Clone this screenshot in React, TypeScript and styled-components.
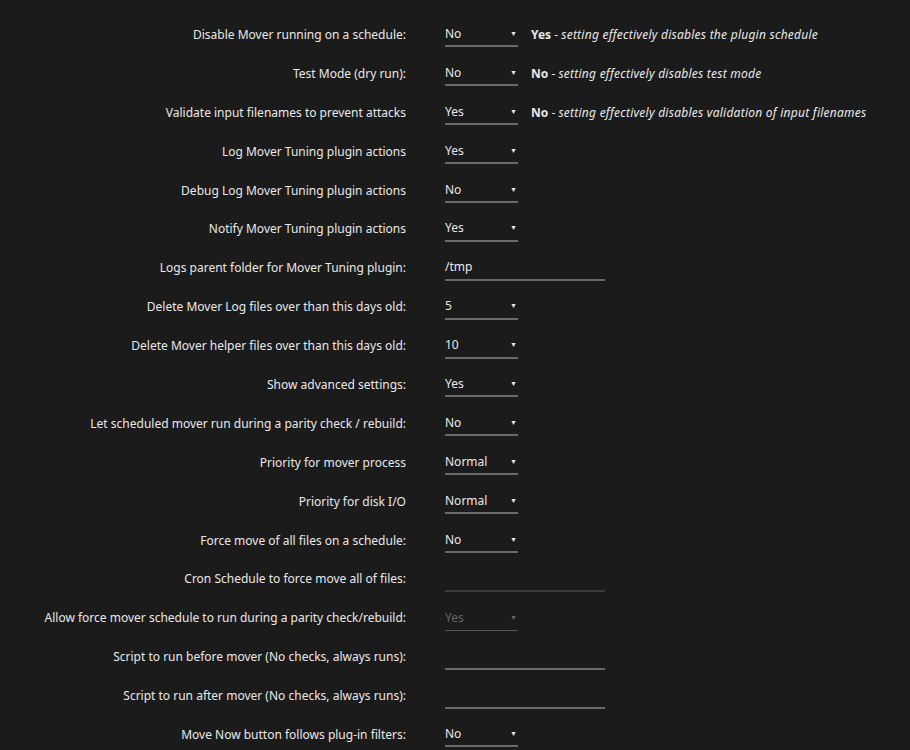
import React from "react";
import styled, { createGlobalStyle } from "styled-components";

const Global = createGlobalStyle`
  html, body { margin: 0; padding: 0; background: #1c1b1b; }
  body { font-family: "Noto Sans", "Open Sans", sans-serif; font-size: 12px; color: #e8e8e8; }
`;

const Form = styled.div`
  padding-top: 15px;
  display: flex;
  flex-direction: column;
`;

const Row = styled.div`
  display: grid;
  grid-template-columns: 406px auto 1fr;
  column-gap: 39px;
  align-items: center;
  height: 38.9px;
`;

const Label = styled.div`
  text-align: right;
  white-space: nowrap;
  color: #e8e8e8;
`;

const Controls = styled.div`
  display: flex;
  align-items: center;
  gap: 13px;
`;

const SelectBox = styled.div<{ $disabled?: boolean }>`
  box-sizing: border-box;
  width: 73px;
  height: 26px;
  display: flex;
  align-items: center;
  justify-content: space-between;
  border-bottom: ${(p) => (p.$disabled ? "1px solid #555" : "2px solid #6a6a6a")};
  color: ${(p) => (p.$disabled ? "#666" : "#e8e8e8")};
`;

const Arrow = styled.span<{ $disabled?: boolean }>`
  font-size: 7px;
  margin-right: 1px;
  color: ${(p) => (p.$disabled ? "#666" : "#e8e8e8")};
`;

const TextBox = styled.div<{ $dim?: boolean }>`
  box-sizing: border-box;
  width: 160px;
  height: 26px;
  display: flex;
  align-items: center;
  border-bottom: ${(p) => (p.$dim ? "2px solid #3a3a3a" : "2px solid #6a6a6a")};
`;

const Note = styled.span`
  white-space: nowrap;
  color: #e8e8e8;
  b { font-weight: 700; }
  i { font-style: italic; letter-spacing: 0.25px; }
`;

type Item = {
  label: string;
  kind: "select" | "text";
  value: string;
  disabled?: boolean;
  dim?: boolean;
  noteBold?: string;
  note?: string;
};

const items: Item[] = [
  { label: "Disable Mover running on a schedule:", kind: "select", value: "No", noteBold: "Yes", note: "setting effectively disables the plugin schedule" },
  { label: "Test Mode (dry run):", kind: "select", value: "No", noteBold: "No", note: "setting effectively disables test mode" },
  { label: "Validate input filenames to prevent attacks", kind: "select", value: "Yes", noteBold: "No", note: "setting effectively disables validation of input filenames" },
  { label: "Log Mover Tuning plugin actions", kind: "select", value: "Yes" },
  { label: "Debug Log Mover Tuning plugin actions", kind: "select", value: "No" },
  { label: "Notify Mover Tuning plugin actions", kind: "select", value: "Yes" },
  { label: "Logs parent folder for Mover Tuning plugin:", kind: "text", value: "/tmp" },
  { label: "Delete Mover Log files over than this days old:", kind: "select", value: "5" },
  { label: "Delete Mover helper files over than this days old:", kind: "select", value: "10" },
  { label: "Show advanced settings:", kind: "select", value: "Yes" },
  { label: "Let scheduled mover run during a parity check / rebuild:", kind: "select", value: "No" },
  { label: "Priority for mover process", kind: "select", value: "Normal" },
  { label: "Priority for disk I/O", kind: "select", value: "Normal" },
  { label: "Force move of all files on a schedule:", kind: "select", value: "No" },
  { label: "Cron Schedule to force move all of files:", kind: "text", value: "", dim: true },
  { label: "Allow force mover schedule to run during a parity check/rebuild:", kind: "select", value: "Yes", disabled: true },
  { label: "Script to run before mover (No checks, always runs):", kind: "text", value: "" },
  { label: "Script to run after mover (No checks, always runs):", kind: "text", value: "" },
  { label: "Move Now button follows plug-in filters:", kind: "select", value: "No" },
];

export default function App() {
  return (
    <>
      <Global />
      <Form>
        {items.map((it) => (
          <Row key={it.label}>
            <Label>{it.label}</Label>
            <Controls>
              {it.kind === "select" ? (
                <SelectBox $disabled={it.disabled}>
                  <span>{it.value}</span>
                  <Arrow $disabled={it.disabled}>▼</Arrow>
                </SelectBox>
              ) : (
                <TextBox $dim={it.dim}>{it.value}</TextBox>
              )}
              {it.noteBold && (
                <Note>
                  <b>{it.noteBold}</b> - <i>{it.note}</i>
                </Note>
              )}
            </Controls>
            <span />
          </Row>
        ))}
      </Form>
    </>
  );
}
